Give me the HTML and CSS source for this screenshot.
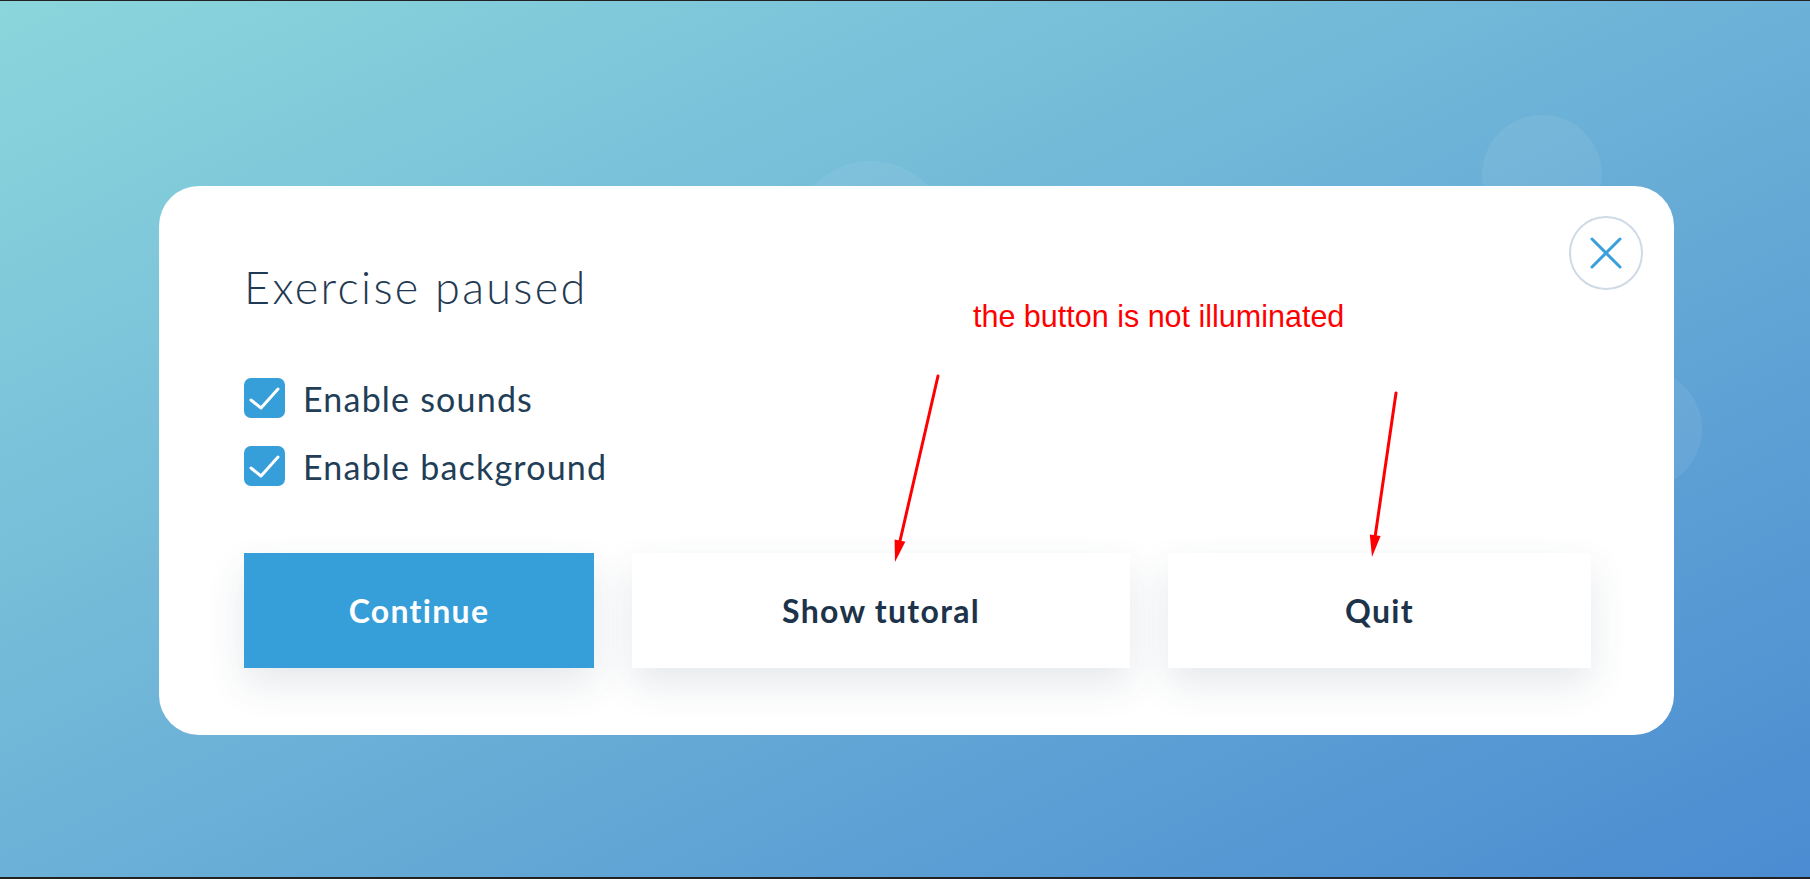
FILE: index.html
```html
<!DOCTYPE html>
<html lang="en">
<head>
<meta charset="utf-8">
<title>Exercise paused</title>
<link rel="stylesheet" href="styles.css">
</head>
<body>
<div class="stage">
  <span class="bubble bubble-a"></span>
  <span class="bubble bubble-b"></span>
  <span class="bubble bubble-c"></span>

  <div class="card">
    <button class="close" aria-label="Close">
      <svg width="32" height="32" viewBox="0 0 32 32"><path d="M2 2 L30 30 M30 2 L2 30" stroke="#3a9fdc" stroke-width="3" stroke-linecap="round" fill="none"/></svg>
    </button>
    <h1 class="title">Exercise paused</h1>
    <div class="options">
      <label class="option">
        <span class="box"><svg width="41" height="40" viewBox="0 0 41 40"><path d="M7 22 L17 30 L34 11" stroke="#fff" stroke-width="3" stroke-linecap="round" stroke-linejoin="round" fill="none"/></svg></span>
        <span class="label">Enable sounds</span>
      </label>
      <label class="option">
        <span class="box"><svg width="41" height="40" viewBox="0 0 41 40"><path d="M7 22 L17 30 L34 11" stroke="#fff" stroke-width="3" stroke-linecap="round" stroke-linejoin="round" fill="none"/></svg></span>
        <span class="label">Enable background</span>
      </label>
    </div>
    <div class="actions">
      <button class="btn btn-primary">Continue</button>
      <button class="btn btn-plain">Show tutoral</button>
      <button class="btn btn-plain">Quit</button>
    </div>
  </div>

  <div class="note">the button is not illuminated</div>
  <svg class="arrows" width="1810" height="876" viewBox="0 0 1810 876">
    <g transform="translate(0,-1)">
      <line x1="938" y1="376" x2="900" y2="541" stroke="#ff0000" stroke-width="3" stroke-linecap="round"/>
      <polygon points="895,562 905.3,541.8 894.6,539.4" fill="#ff0000"/>
      <line x1="1396" y1="393" x2="1375.2" y2="536" stroke="#ff0000" stroke-width="3" stroke-linecap="round"/>
      <polygon points="1372,557 1380.6,536 1369.8,534.4" fill="#ff0000"/>
    </g>
  </svg>
</div>
</body>
</html>
```

FILE: styles.css
```css
html, body {
  margin: 0;
  padding: 0;
}

body {
  width: 1810px;
  height: 879px;
  box-sizing: border-box;
  border-top: 1px solid #222222;
  border-bottom: 2px solid #222222;
  background: #222222;
  overflow: hidden;
  font-family: "Lato", "Liberation Sans", sans-serif;
}

.stage {
  position: relative;
  height: 876px;
  background: linear-gradient(to bottom right, #8bd6dc 0%, #6cb1d7 50%, #4b8bd1 100%);
  padding-top: 185px;
  padding-left: 159px;
  box-sizing: border-box;
  overflow: hidden;
}

.bubble {
  position: absolute;
  border-radius: 50%;
  background: rgba(255, 255, 255, 0.07);
}
.bubble-a { left: 793px; top: 160px; width: 156px; height: 156px; }
.bubble-b { left: 1482px; top: 114px; width: 120px; height: 120px; }
.bubble-c { left: 1582px; top: 368px; width: 120px; height: 120px; }

.card {
  position: relative;
  width: 1515px;
  height: 549px;
  box-sizing: border-box;
  background: #ffffff;
  border-radius: 40px;
  padding: 75px 83px 66px 85px;
  display: flex;
  flex-direction: column;
}

.close {
  position: absolute;
  top: 30px;
  right: 31px;
  width: 74px;
  height: 74px;
  box-sizing: border-box;
  border-radius: 50%;
  border: 2px solid #cfdae6;
  background: #ffffff;
  display: flex;
  align-items: center;
  justify-content: center;
  padding: 0;
}

.title {
  margin: 0;
  font-family: "Lato", sans-serif;
  font-weight: 300;
  font-size: 45px;
  line-height: 52px;
  color: #1f3a52;
  letter-spacing: 2.3px;
}

.options {
  margin-top: 65px;
  display: flex;
  flex-direction: column;
  gap: 28px;
}

.option {
  display: flex;
  align-items: center;
  gap: 18px;
  height: 40px;
}

.box {
  width: 41px;
  height: 40px;
  border-radius: 7px;
  background: #369ed9;
  display: flex;
}

.label {
  font-family: "Lato", sans-serif;
  font-weight: 400;
  font-size: 34px;
  color: #223e57;
  letter-spacing: 1.2px;
}

.actions {
  margin-top: 67px;
  display: grid;
  grid-template-columns: 350fr 498fr 423fr;
  column-gap: 38px;
}

.btn {
  height: 115px;
  border: none;
  font-family: "Lato", sans-serif;
  font-weight: 700;
  font-size: 32px;
  letter-spacing: 1.3px;
  box-shadow: 0 16px 38px rgba(40, 62, 92, 0.12);
  padding: 0;
}

.btn-primary {
  background: #369ed9;
  color: #ffffff;
}

.btn-plain {
  background: #ffffff;
  color: #1c3349;
}

.note {
  position: absolute;
  left: 973px;
  top: 297px;
  font-family: "Liberation Sans", Arial, sans-serif;
  font-size: 30.5px;
  line-height: 36px;
  color: #ff0000;
  white-space: nowrap;
}

.arrows {
  position: absolute;
  left: 0;
  top: 0;
  pointer-events: none;
}
```
